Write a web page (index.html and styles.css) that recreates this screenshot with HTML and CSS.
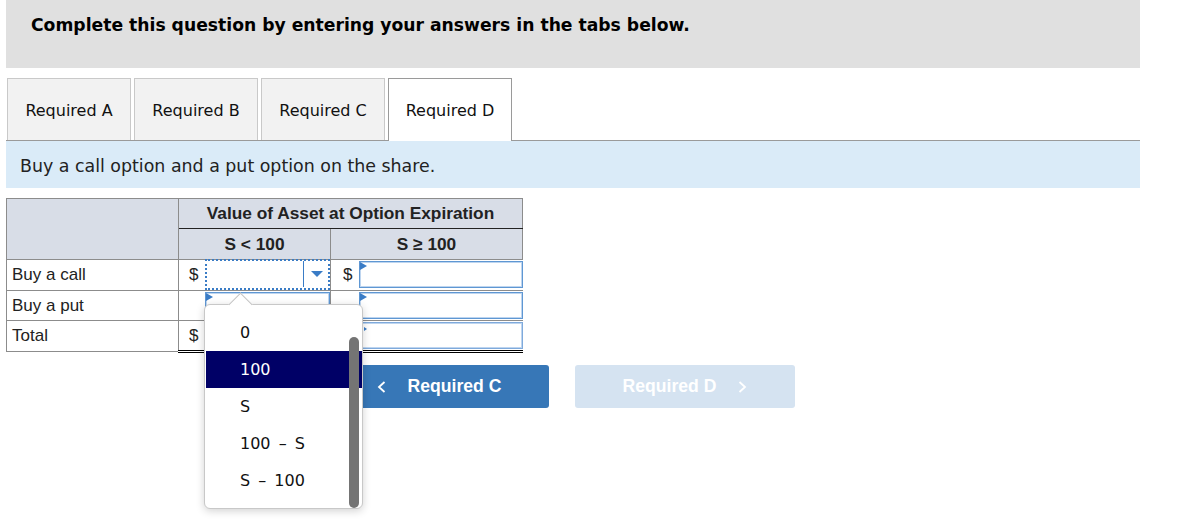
FILE: index.html
```html
<!DOCTYPE html>
<html>
<head>
<meta charset="utf-8">
<link rel="stylesheet" href="styles.css">
</head>
<body>
<div class="page">
  <div class="instructions">Complete this question by entering your answers in the tabs below.</div>
  <div class="tabs">
    <div class="tab">Required A</div>
    <div class="tab">Required B</div>
    <div class="tab">Required C</div>
    <div class="tab active">Required D</div>
  </div>
  <div class="prompt">Buy a call option and a put option on the share.</div>
  <div class="work">
    <table class="grid">
      <colgroup>
        <col class="c-label"><col class="c-cur1"><col class="c-in1"><col class="c-cur2"><col class="c-in2">
      </colgroup>
      <thead>
        <tr class="h1">
          <th rowspan="2" class="blank"></th>
          <th colspan="4" class="group">Value of Asset at Option Expiration</th>
        </tr>
        <tr class="h2">
          <th colspan="2">S &lt; 100</th>
          <th colspan="2" class="sep">S ≥ 100</th>
        </tr>
      </thead>
      <tbody>
        <tr>
          <td class="label">Buy a call</td>
          <td class="cur">$</td>
          <td class="incell"><div class="select focused"><span class="arrow-zone"><span class="tri"></span></span></div></td>
          <td class="cur sep">$</td>
          <td class="incell"><div class="field"><span class="flag"></span></div></td>
        </tr>
        <tr>
          <td class="label">Buy a put</td>
          <td class="cur"></td>
          <td class="incell"><div class="field"><span class="flag"></span></div></td>
          <td class="cur sep"></td>
          <td class="incell"><div class="field"><span class="flag"></span></div></td>
        </tr>
        <tr class="total">
          <td class="label">Total</td>
          <td class="cur">$</td>
          <td class="incell"><div class="field plain"><span class="flag"></span></div></td>
          <td class="cur sep"></td>
          <td class="incell"><div class="field plain"><span class="flag small"></span></div></td>
        </tr>
      </tbody>
    </table>
    <div class="nav">
      <div class="btn prev">
        <svg width="9" height="12" viewBox="0 0 9 12"><polyline points="7.5,1 2,6 7.5,11" fill="none" stroke="#fff" stroke-width="1.8"/></svg>
        <span>Required C</span>
      </div>
      <div class="btn next">
        <span>Required D</span>
        <svg width="9" height="12" viewBox="0 0 9 12"><polyline points="1.5,1 7,6 1.5,11" fill="none" stroke="#fff" stroke-width="1.8"/></svg>
      </div>
    </div>
    <div class="popup">
      <span class="notch"></span>
      <ul class="options">
        <li>0</li>
        <li class="hl">100</li>
        <li>S</li>
        <li>100 – S</li>
        <li>S – 100</li>
      </ul>
      <span class="thumb"></span>
    </div>
  </div>
</div>
</body>
</html>
```

FILE: styles.css
```css
html, body {
  margin: 0;
  padding: 0;
  background: #fff;
}

body {
  min-height: 532px;
}

.page {
  margin-left: 6px;
  width: 1134px;
  min-height: 532px;
  font-family: "DejaVu Sans", Verdana, sans-serif;
  color: #222;
}

.instructions {
  height: 68px;
  box-sizing: border-box;
  background: #e0e0e0;
  padding: 15px 0 0 25px;
  font-size: 17.2px;
  line-height: 21px;
  font-weight: bold;
  color: #000;
}

.tabs {
  margin-top: 10px;
  display: flex;
  align-items: flex-end;
  gap: 3px;
  padding-left: 1px;
  border-bottom: 1px solid #9a9a9a;
  height: 62px;
}

.tab {
  width: 124px;
  height: 62px;
  box-sizing: border-box;
  border: 1px solid #c9c9c9;
  border-bottom: none;
  background: #f2f2f2;
  display: flex;
  align-items: center;
  justify-content: center;
  padding-top: 2px;
  font-size: 16px;
  color: #111;
}

.tab.active {
  background: #fff;
  border-color: #9a9a9a;
  height: 63px;
  margin-bottom: -1px;
  padding-top: 1px;
}

.prompt {
  height: 47px;
  box-sizing: border-box;
  line-height: 47px;
  padding-top: 2px;
  background: #daebf8;
  padding-left: 14px;
  font-size: 17.4px;
  color: #222;
}

.work {
  position: relative;
  margin-top: 10px;
}

.grid {
  border-collapse: collapse;
  table-layout: fixed;
  width: 516px;
  font-family: "Liberation Sans", Arial, sans-serif;
  font-size: 17px;
  color: #222;
}

.c-label { width: 172px; }
.c-cur1 { width: 26px; }
.c-in1 { width: 126px; }
.c-cur2 { width: 28px; }
.c-in2 { width: 164px; }

.grid th {
  background: #d8dde7;
  font-weight: bold;
  font-size: 17.3px;
  text-align: center;
  padding: 0;
  border: 1px solid #8c8c8c;
}

.grid .h1 th { height: 29px; }
.grid .h2 th { height: 30px; }

.grid th.group {
  border-bottom: 1px solid #222;
}

.grid td {
  padding: 0;
  height: 28px;
  line-height: 20px;
  border-top: 1px solid #8c8c8c;
  border-bottom: 1px solid #8c8c8c;
}

.grid tbody tr:first-child td {
  height: 29px;
}

.grid td.label {
  padding-left: 5px;
  border-left: 1px solid #8c8c8c;
  border-right: 1px solid #8c8c8c;
}

.grid td.cur {
  text-align: right;
  padding-right: 6px;
}

.grid td.sep {
  border-left: 1px solid #8c8c8c;
}

.grid td.incell {
  padding: 1px 0 0;
  position: relative;
  vertical-align: top;
}

.grid tr.total td.cur,
.grid tr.total td.incell {
  border-top: 1px solid #000;
  border-bottom: 3px double #000;
}

.field {
  position: relative;
  height: 27px;
  box-sizing: border-box;
  border: 1px solid #5f97d3;
  box-shadow: inset 0 0 0 1px #bed5ef;
}

.field.plain {
  border-color: #7faadc;
}

.flag {
  position: absolute;
  left: 0;
  top: 0;
  width: 0;
  height: 0;
  border-left: 7px solid #3a7cc6;
  border-top: 4px solid transparent;
  border-bottom: 4px solid transparent;
}

.flag.small {
  border-left-width: 3px;
  border-top-width: 2px;
  border-bottom-width: 2px;
  left: 4px;
  top: 4px;
}

.select {
  height: 31px;
  margin: -2px 0 -2px 0;
  box-sizing: border-box;
  border: 2px dotted #3a7cc6;
  display: flex;
  justify-content: flex-end;
}

.arrow-zone {
  width: 24px;
  border-left: 1px solid #3a7cc6;
  margin: 0 0 1px 0;
  display: flex;
  align-items: center;
  justify-content: center;
}

.tri {
  width: 0;
  height: 0;
  border-top: 6px solid #3a7cc6;
  border-left: 6px solid transparent;
  border-right: 6px solid transparent;
  margin-left: 2px;
}

.nav {
  display: flex;
  gap: 26px;
  margin-top: 12px;
  padding-left: 323px;
}

.btn {
  width: 220px;
  height: 43px;
  box-sizing: border-box;
  border-radius: 3px;
  display: flex;
  align-items: center;
  justify-content: center;
  gap: 22px;
  font-family: "Liberation Sans", Arial, sans-serif;
  font-weight: bold;
  font-size: 17.6px;
  color: #fff;
}

.btn.prev { background: #3777b7; }
.btn.next { background: #d5e3f1; }

.popup {
  position: absolute;
  left: 198px;
  top: 106px;
  width: 159px;
  height: 205px;
  box-sizing: border-box;
  background: #fff;
  border: 1px solid #c8c8c8;
  border-radius: 6px;
  box-shadow: 0 2px 8px rgba(0, 0, 0, 0.18);
  z-index: 5;
}

.notch {
  position: absolute;
  left: 27px;
  top: -9px;
  width: 16px;
  height: 16px;
  background: #fff;
  border-left: 1px solid #c4c4c4;
  border-top: 1px solid #c4c4c4;
  transform: rotate(45deg);
}

.options {
  list-style: none;
  margin: 0;
  padding: 9px 0 0 1px;
  position: relative;
}

.options li {
  height: 37px;
  line-height: 37px;
  padding-left: 34px;
  font-family: "DejaVu Sans", Verdana, sans-serif;
  font-size: 16px;
  word-spacing: 3px;
  color: #111;
}

.options li.hl {
  background: #000066;
  color: #fff;
}

.thumb {
  position: absolute;
  left: 144px;
  top: 32px;
  width: 10px;
  height: 171px;
  border-radius: 5px;
  background: #747474;
}
```
